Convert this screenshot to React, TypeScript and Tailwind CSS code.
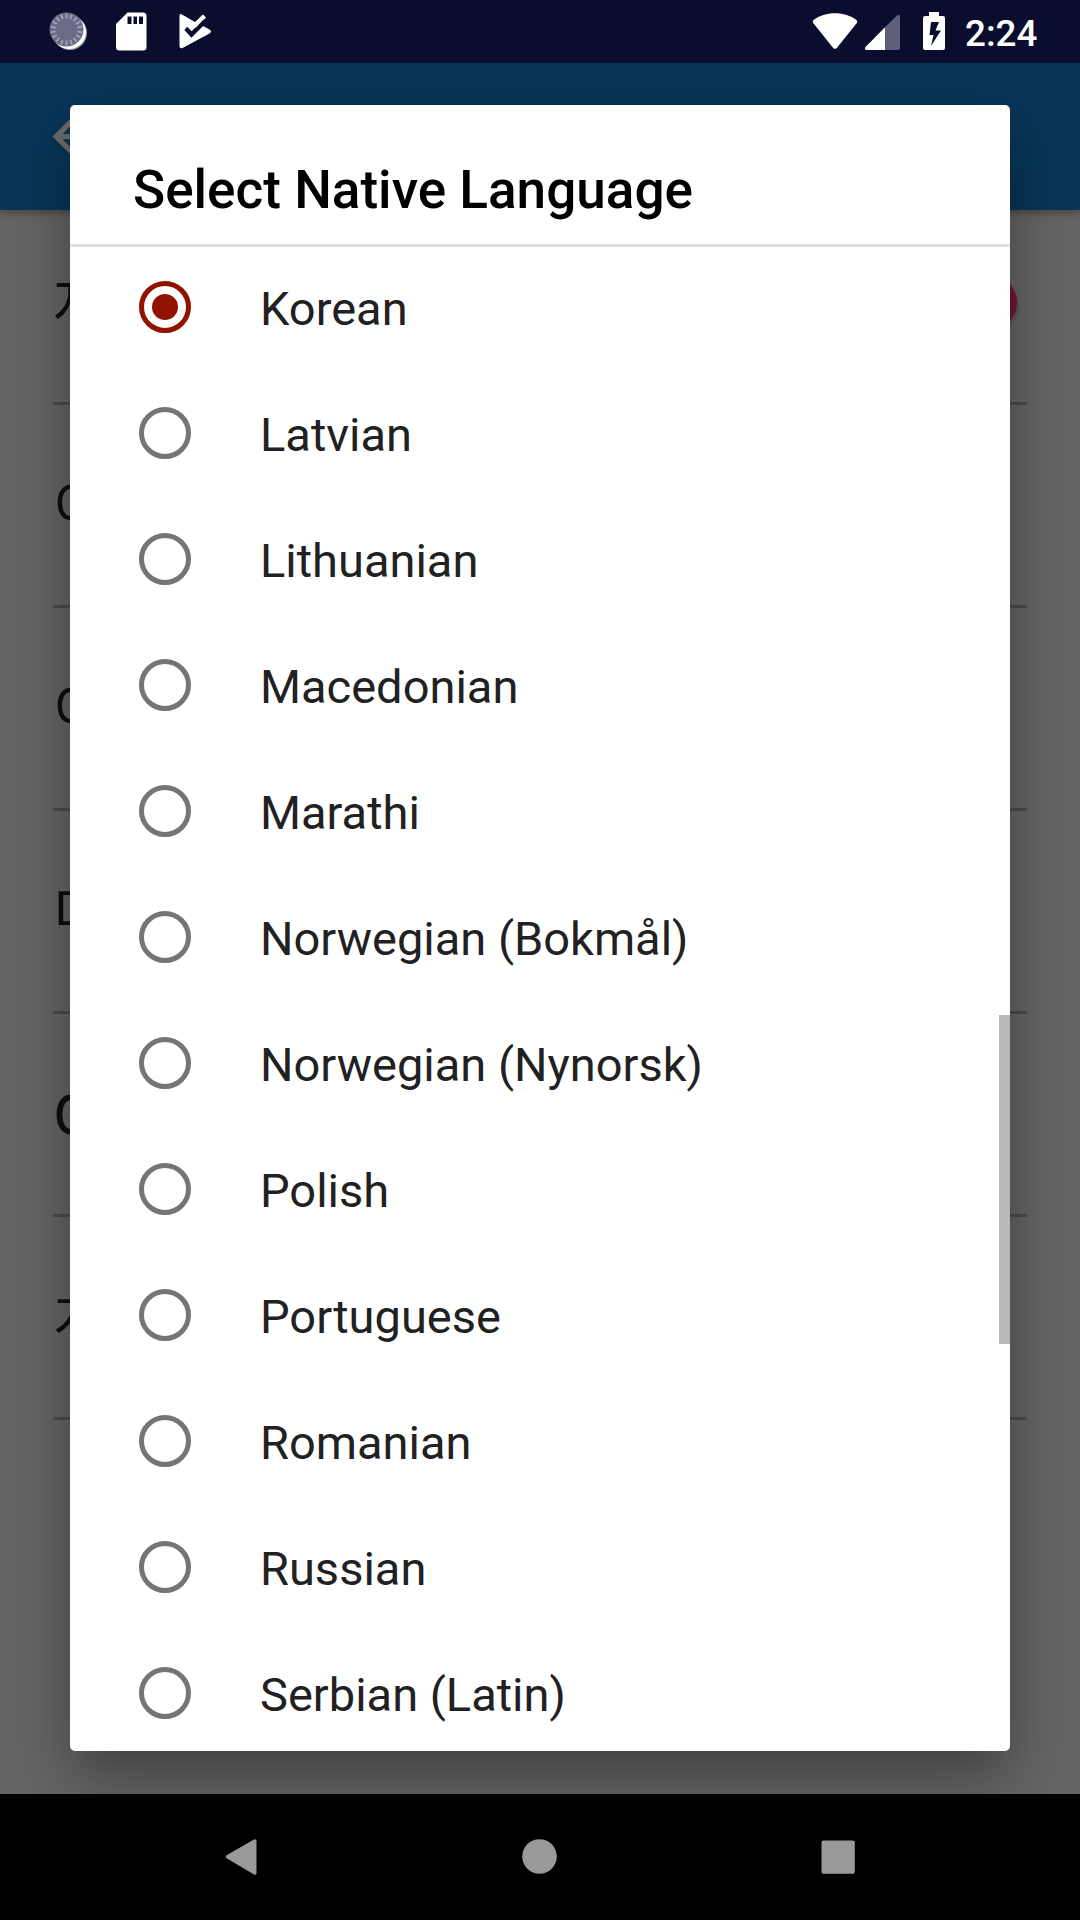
const languages = [
  "Korean",
  "Latvian",
  "Lithuanian",
  "Macedonian",
  "Marathi",
  "Norwegian (Bokmål)",
  "Norwegian (Nynorsk)",
  "Polish",
  "Portuguese",
  "Romanian",
  "Russian",
  "Serbian (Latin)",
];

const rayAngles = Array.from({ length: 18 }, (_, i) => i * 20);

function StatusBar() {
  return (
    <header className="flex h-[63px] shrink-0 bg-[#0b0d2f] text-white">
      <svg width="240" height="63" viewBox="0 0 240 63">
        <circle cx="70" cy="33" r="17" fill="#9a9bab" />
        <circle cx="69" cy="32" r="17" fill="#fff" />
        <circle cx="66.5" cy="29.5" r="17" fill="#6a6c86" />
        <g stroke="#a3a4b5" strokeWidth="1.8">
          {rayAngles.map((a) => (
            <line key={a} x1="66.5" y1="13.5" x2="66.5" y2="18.5" transform={`rotate(${a} 66.5 29.5)`} />
          ))}
        </g>
        <path
          fill="#fff"
          fillRule="evenodd"
          d="M127.500 12.500H143a3.500 3.500 0 0 1 3.500 3.500V47a3.500 3.500 0 0 1-3.500 3.500H119.500A3.500 3.500 0 0 1 116 47V24ZM127.500 16.500V24H131.500V16.500ZM133.500 16.500V24H137V16.500ZM139 16.500V24H143V16.500Z"
        />
        <path
          fill="#fff"
          d="M181.500 14.200L195 22 203 14.500 206 17.500 191.500 32 186.500 27.200 185 29.500 191.500 36.500 202.500 25.800 209.500 29.500Q212.500 31.500 209.500 33.500L182.500 48Q179.500 49 179.500 46V16Q179.500 13.500 181.500 14.200Z"
        />
        <path d="M186 28.500L191.500 34.500 205 21" fill="none" stroke="#0b0d2f" strokeWidth="4.500" />
        <path d="M190 21.500L195.500 25.500 204 16" fill="none" stroke="#fff" strokeWidth="3.500" />
      </svg>
      <svg className="ml-auto" width="160" height="63" viewBox="800 0 160 63">
        <path d="M813.500 20C825 11 845 11 856.500 20Q858 21.300 856.800 23L837 47.800Q835 50 833 47.800L813.200 23Q812 21.300 813.500 20Z" fill="#fff" />
        <path d="M897 15.500Q900 13.500 900 17V47.500Q900 50 897.500 50H885V27.200Z" fill="#5e607b" />
        <path d="M885 27.200V50H866.500Q864 49.500 865.500 47Z" fill="#fff" />
        <path
          fill="#fff"
          fillRule="evenodd"
          d="M929 12H939V16H943A2 2 0 0 1 945 18V48A2 2 0 0 1 943 50H925A2 2 0 0 1 923 48V18A2 2 0 0 1 925 16H929ZM931 22L929.500 35H933.500L931 46 941 30.500H935.500L939 22Z"
        />
      </svg>
      <span className="w-[120px] pl-[5px] pt-[12px] text-[36.750px] font-medium leading-[43px]">2:24</span>
    </header>
  );
}

function BackgroundScreen() {
  return (
    <div className="flex h-full flex-col bg-[#656565]">
      <div className="z-0 flex h-[147px] shrink-0 items-center bg-[#083557] pl-[42px] shadow-[0_3px_8px_rgba(40,20,15,0.4)]">
        <svg width="63" height="63" viewBox="0 0 24 24">
          <path d="M20 11H7.830l5.590-5.590L12 4l-8 8 8 8 1.410-1.410L7.830 13H20v-2z" fill="#6b6b6b" />
        </svg>
      </div>
      <div className="flex flex-col px-[53px] text-[56px] text-[#0d0d0d]">
        <Row label="자동" toggle />
        <Row label="이름" />
        <Row label="이름" />
        <Row label="미디어" />
        <Row label="이용" large />
        <Row label="개인" />
      </div>
    </div>
  );
}

function Row({ label, toggle, large }: { label: string; toggle?: boolean; large?: boolean }) {
  return (
    <div className={`flex items-center justify-between border-b-[3px] border-[#4b4b4b] ${toggle ? "h-[195px] pb-[8px]" : "h-[203px]"}`}>
      <span className={large ? "-ml-px pt-[15px] text-[61px] leading-none [-webkit-text-stroke:1px_#0d0d0d]" : "pt-[5px] leading-none"}>{label}</span>
      {toggle && <span className="mr-[10px] size-[53px] rounded-full bg-[#701438] shadow-[0_3px_5px_rgba(0,0,0,0.3)]" />}
    </div>
  );
}

function Radio({ checked }: { checked: boolean }) {
  return (
    <span
      className={`flex size-[52px] shrink-0 items-center justify-center rounded-full border-[5px] ${
        checked ? "border-[#921200]" : "border-[#757575]"
      }`}
    >
      {checked && <span className="size-[26px] rounded-full bg-[#921200]" />}
    </span>
  );
}

function LanguageDialog() {
  return (
    <section
      role="dialog"
      className="relative mx-[70px] mt-[42px] flex h-[1646px] flex-1 flex-col overflow-hidden rounded-[5px] bg-white"
    >
      <h1 className="h-[139px] shrink-0 pl-[63px] pt-[54px] text-[53.100px] font-medium leading-[62px] text-black">
        Select Native Language
      </h1>
      <ul className="flex flex-col border-t-[3px] border-[#dfdfdf]">
        {languages.map((name, i) => (
          <li key={name} className={`flex shrink-0 items-center pl-[69px] ${i === 0 ? "h-[123px] pb-[3px]" : "h-[126px]"}`}>
            <Radio checked={i === 0} />
            <span className="ml-[69px] mt-[3px] text-[47px] leading-[56px] text-[#212121]">{name}</span>
          </li>
        ))}
      </ul>
      <div className="absolute right-0 top-[910px] h-[329px] w-[11px] bg-[#b9b9b9]" />
    </section>
  );
}

function NavigationBar() {
  return (
    <nav className="flex h-[126px] shrink-0 bg-black">
      <svg width="1080" height="126" viewBox="0 1794 1080 126" fill="#999">
        <path d="M254 1839.500Q256.500 1838.500 256.500 1841V1873Q256.500 1875.500 254 1874.500L227 1858.500Q224.500 1856.700 227 1855Z" />
        <circle cx="539.500" cy="1856.500" r="17.300" />
        <rect x="821.500" y="1840.500" width="33.300" height="33.300" rx="2" />
      </svg>
    </nav>
  );
}

export default function App() {
  return (
    <div className="flex h-[1920px] w-[1080px] flex-col overflow-hidden font-['Roboto','Noto_Sans_CJK_KR',sans-serif]">
      <StatusBar />
      <main className="relative h-[1731px] shrink-0 overflow-hidden">
        <BackgroundScreen />
        <div className="absolute inset-0 flex items-start">
          <div className="absolute bottom-[43px] left-[70px] right-[70px] top-[42px] rounded-[5px] shadow-[0_26px_60px_rgba(0,0,0,0.36)]" />
          <LanguageDialog />
        </div>
      </main>
      <NavigationBar />
    </div>
  );
}
